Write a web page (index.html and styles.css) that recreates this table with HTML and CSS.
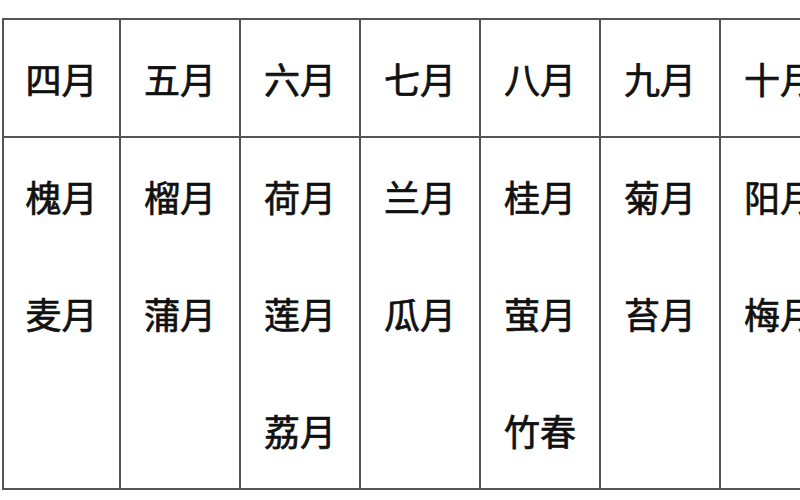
FILE: index.html
```html
<!DOCTYPE html>
<html lang="zh">
<head>
<meta charset="utf-8">
<title>月份别称</title>
<link rel="stylesheet" href="styles.css">
</head>
<body>
<div class="table">
  <div class="col first">
    <div class="head">四月</div>
    <div class="body"><div>槐月</div><div>麦月</div></div>
  </div>
  <div class="col">
    <div class="head">五月</div>
    <div class="body"><div>榴月</div><div>蒲月</div></div>
  </div>
  <div class="col">
    <div class="head">六月</div>
    <div class="body"><div>荷月</div><div>莲月</div><div>荔月</div></div>
  </div>
  <div class="col">
    <div class="head">七月</div>
    <div class="body"><div>兰月</div><div>瓜月</div></div>
  </div>
  <div class="col">
    <div class="head">八月</div>
    <div class="body"><div>桂月</div><div>萤月</div><div>竹春</div></div>
  </div>
  <div class="col">
    <div class="head">九月</div>
    <div class="body"><div>菊月</div><div>苔月</div></div>
  </div>
  <div class="col">
    <div class="head">十月</div>
    <div class="body"><div>阳月</div><div>梅月</div></div>
  </div>
</div>
</body>
</html>
```

FILE: styles.css
```css
html, body {
  margin: 0;
  padding: 0;
  background: #ffffff;
  width: 800px;
  height: 500px;
  overflow: hidden;
}

body {
  font-family: "Noto Sans CJK SC", "Noto Sans", sans-serif;
  color: #111111;
}

.table {
  display: flex;
  margin: 18px 0 0 2px;
  width: max-content;
  border-top: 2px solid #555555;
  border-bottom: 2px solid #555555;
  border-left: 2px solid #555555;
}

.col {
  width: 120px;
  flex: none;
  box-sizing: border-box;
  border-right: 2px solid #555555;
  display: flex;
  flex-direction: column;
}

.col.first {
  width: 117px;
}

.head,
.body {
  font-size: 36px;
  font-weight: 400;
  -webkit-text-stroke: 0.7px #111111;
  text-align: center;
}

.head {
  height: 118px;
  box-sizing: border-box;
  border-bottom: 2px solid #555555;
  display: flex;
  align-items: center;
  justify-content: center;
  line-height: 1;
}

.body {
  height: 350px;
  line-height: 117px;
}
```
